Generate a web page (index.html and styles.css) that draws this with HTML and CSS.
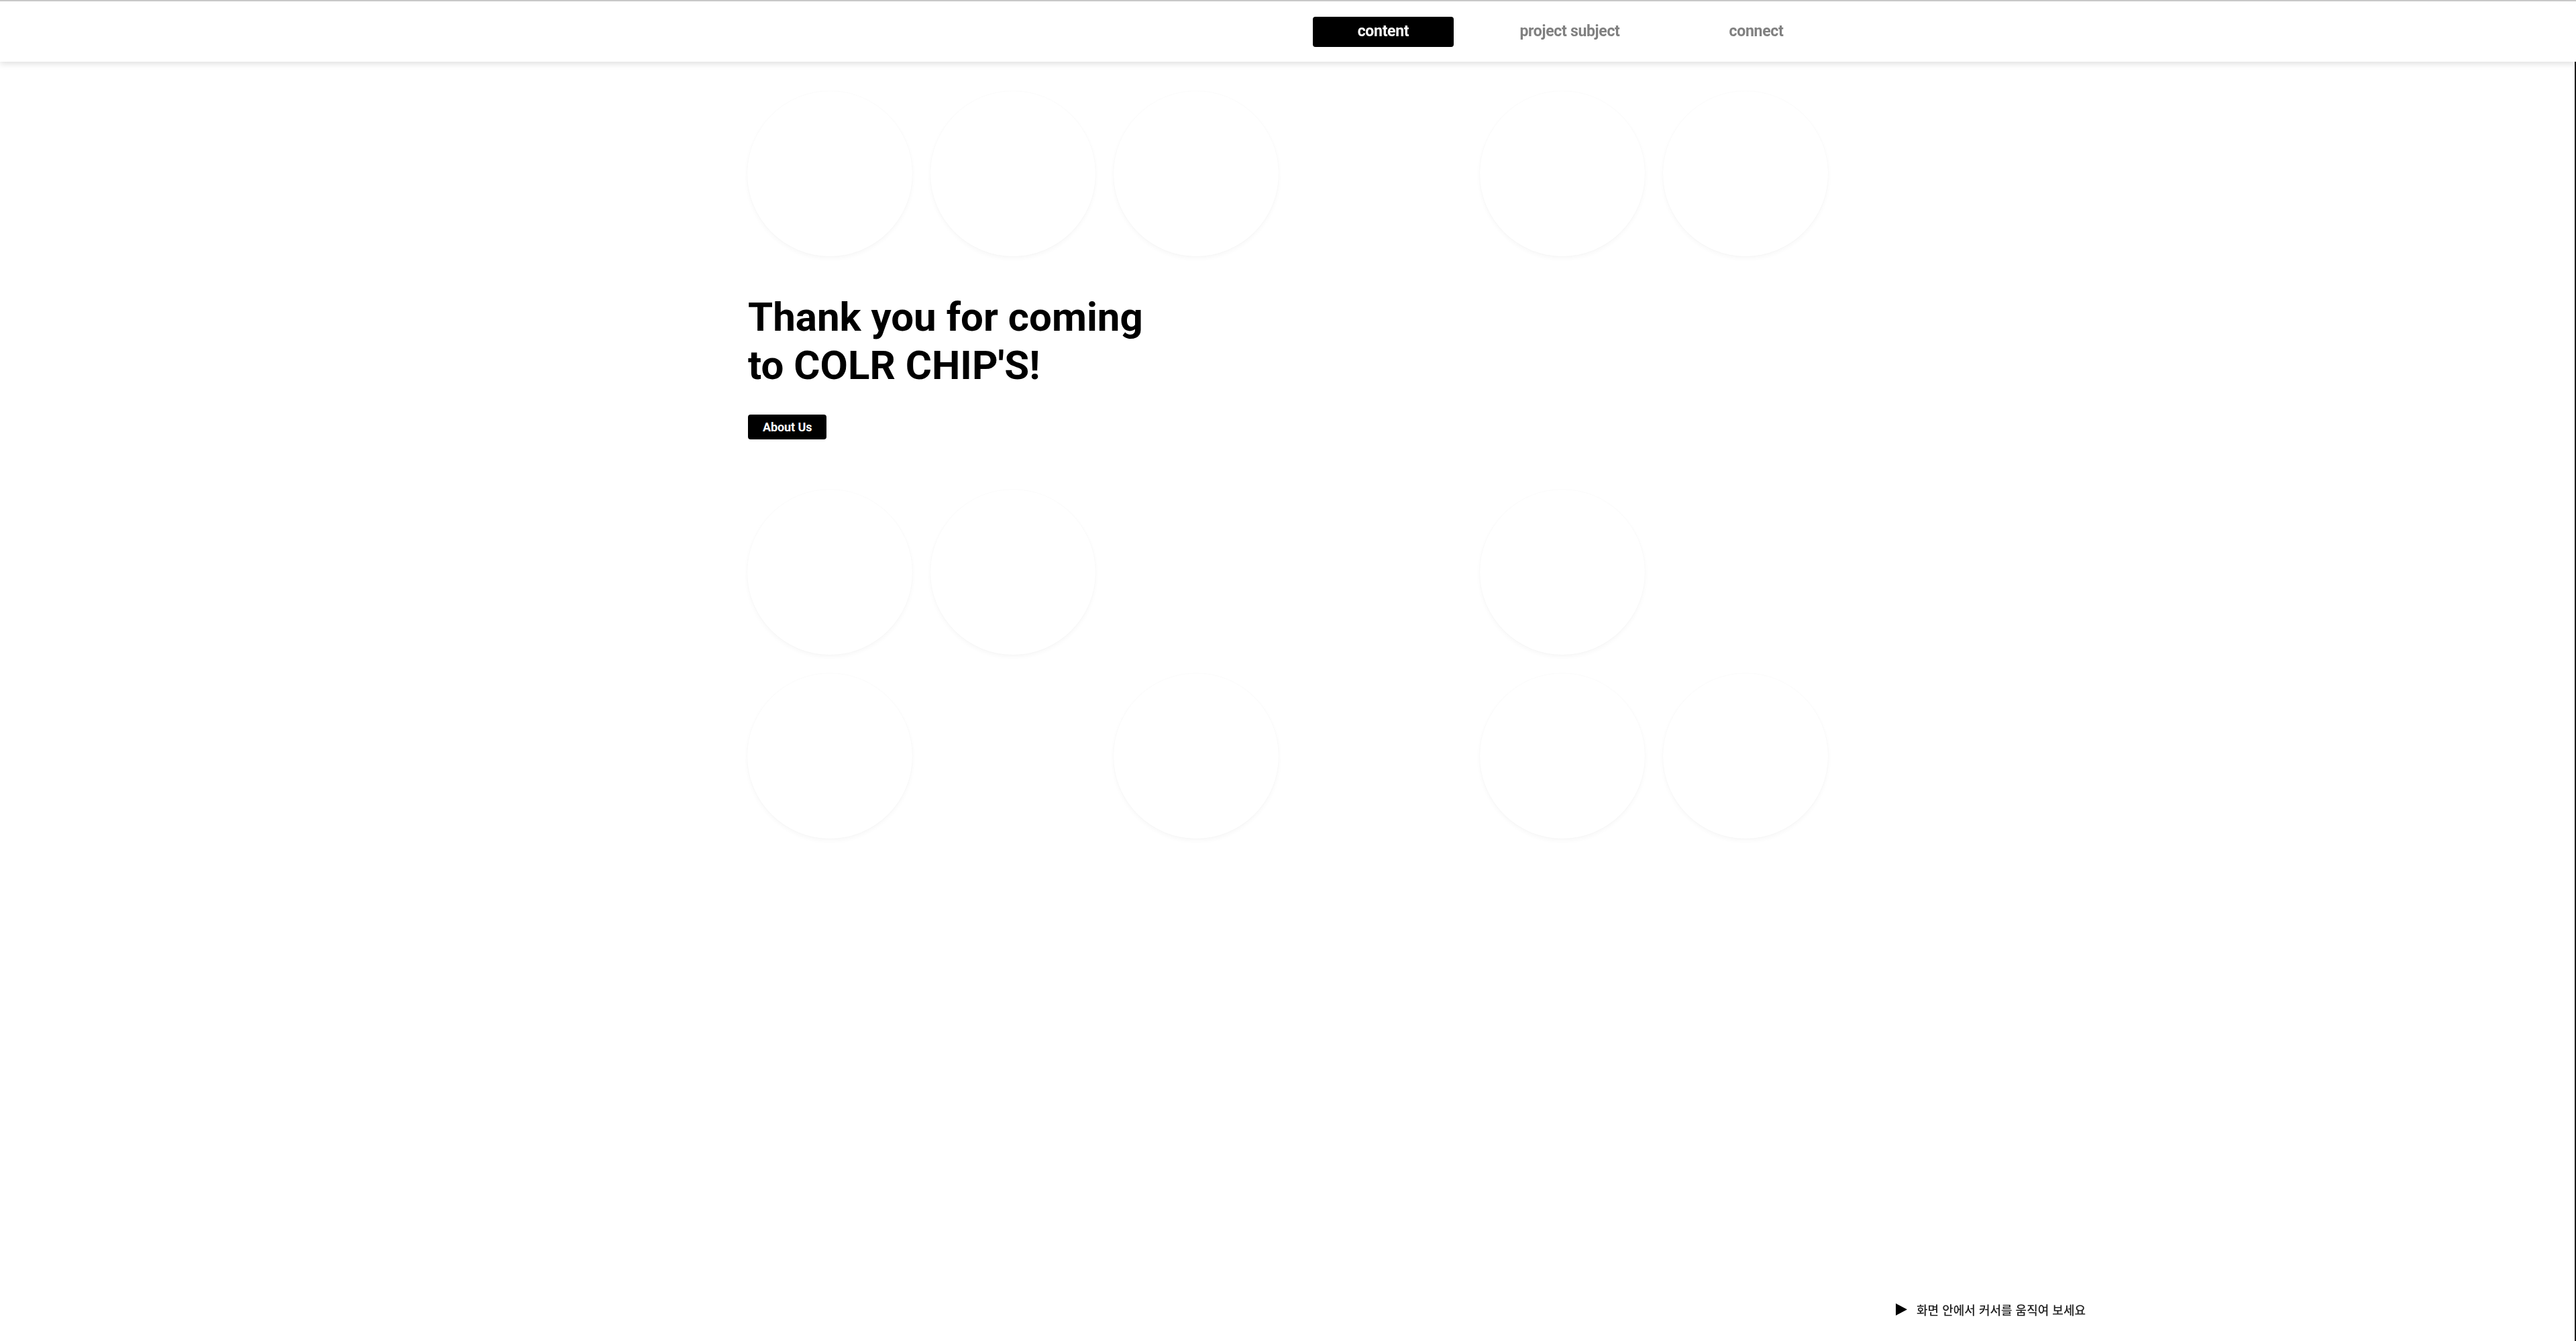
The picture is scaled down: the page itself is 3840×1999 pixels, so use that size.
FILE: index.html
```html
<!DOCTYPE html>
<html lang="ko">
<head>
<meta charset="utf-8">
<title>COLR CHIP'S</title>
<link rel="stylesheet" href="styles.css">
</head>
<body>
<header class="topbar">
  <div class="wrap topbar-inner">
    <nav class="nav">
      <a class="nav-item active" href="#">content</a>
      <a class="nav-item" href="#">project subject</a>
      <a class="nav-item" href="#">connect</a>
    </nav>
  </div>
</header>

<main class="wrap stage">
  <div class="chip-row">
    <span class="chip"></span>
    <span class="chip"></span>
    <span class="chip"></span>
    <span class="chip off"></span>
    <span class="chip"></span>
    <span class="chip"></span>
  </div>

  <section class="intro">
    <h1 class="intro-title">Thank you for coming<br>to COLR CHIP'S!</h1>
    <a class="btn" href="#">About Us</a>
  </section>

  <div class="chip-row">
    <span class="chip"></span>
    <span class="chip"></span>
    <span class="chip off"></span>
    <span class="chip off"></span>
    <span class="chip"></span>
    <span class="chip off"></span>
  </div>

  <div class="chip-row">
    <span class="chip"></span>
    <span class="chip off"></span>
    <span class="chip"></span>
    <span class="chip off"></span>
    <span class="chip"></span>
    <span class="chip"></span>
  </div>
</main>

<div class="hint">
  <span class="hint-arrow"></span>
  <span class="hint-text">화면 안에서 커서를 움직여 보세요</span>
</div>
</body>
</html>
```

FILE: styles.css
```css
* {
  box-sizing: border-box;
}

html, body {
  margin: 0;
  padding: 0;
  background: #ffffff;
}

body {
  font-family: Roboto, "Noto Sans", "Liberation Sans", sans-serif;
  color: #000;
  min-height: 100vh;
  overflow: hidden;
}

body::after {
  content: "";
  position: fixed;
  top: 0;
  right: 0;
  bottom: 0;
  width: 2px;
  background: #1c1c1c;
}

.wrap {
  width: 1612px;
  margin: 0 auto;
}

/* header */
.topbar {
  border-top: 2px solid #c8c8c8;
  height: 92px;
  background: #fff;
  box-shadow: 0 3px 9px rgba(0, 0, 0, 0.13);
  position: relative;
  z-index: 2;
}

.topbar-inner {
  height: 90px;
  display: flex;
  align-items: center;
  justify-content: flex-end;
  padding-right: 3px;
}

.nav {
  display: flex;
  gap: 68px;
}

.nav-item {
  width: 210px;
  height: 45px;
  display: flex;
  align-items: center;
  justify-content: center;
  border-radius: 4px;
  font-size: 23px;
  font-weight: 700;
  letter-spacing: -0.3px;
  color: #808080;
  text-decoration: none;
  padding-bottom: 2px;
}

.nav-item.active {
  background: #000;
  color: #fff;
}

/* stage */
.stage {
  padding-top: 44px;
}

.chip-row {
  display: flex;
  gap: 27px;
}

.chip-row + .chip-row {
  margin-top: 28px;
}

.chip {
  width: 246px;
  height: 246px;
  flex: none;
  border-radius: 50%;
  background: #fff;
  box-shadow: 0 3px 7px rgba(0, 0, 0, 0.035), 0 0 2px rgba(0, 0, 0, 0.035);
}

.chip.off {
  visibility: hidden;
}

.intro {
  margin: 55px 0 75px;
  padding-left: 1px;
  display: flex;
  flex-direction: column;
  align-items: flex-start;
}

.intro-title {
  margin: 0;
  font-size: 60px;
  line-height: 72px;
  font-weight: 700;
  color: #000;
}

.btn {
  margin-top: 37px;
  height: 37px;
  padding: 0 22px;
  display: inline-flex;
  align-items: center;
  background: #000;
  color: #fff;
  border-radius: 4px;
  font-size: 18px;
  font-weight: 700;
  letter-spacing: -0.1px;
  text-decoration: none;
}

/* hint */
.hint {
  position: fixed;
  right: 731px;
  bottom: 35px;
  display: flex;
  align-items: center;
  gap: 14px;
}

.hint-arrow {
  width: 0;
  height: 0;
  border-top: 9.5px solid transparent;
  border-bottom: 9.5px solid transparent;
  border-left: 17px solid #000;
}

.hint-text {
  font-family: "Noto Sans CJK KR", "Noto Sans", sans-serif;
  font-size: 18px;
  font-weight: 500;
  color: #222;
  line-height: 24px;
}
```
